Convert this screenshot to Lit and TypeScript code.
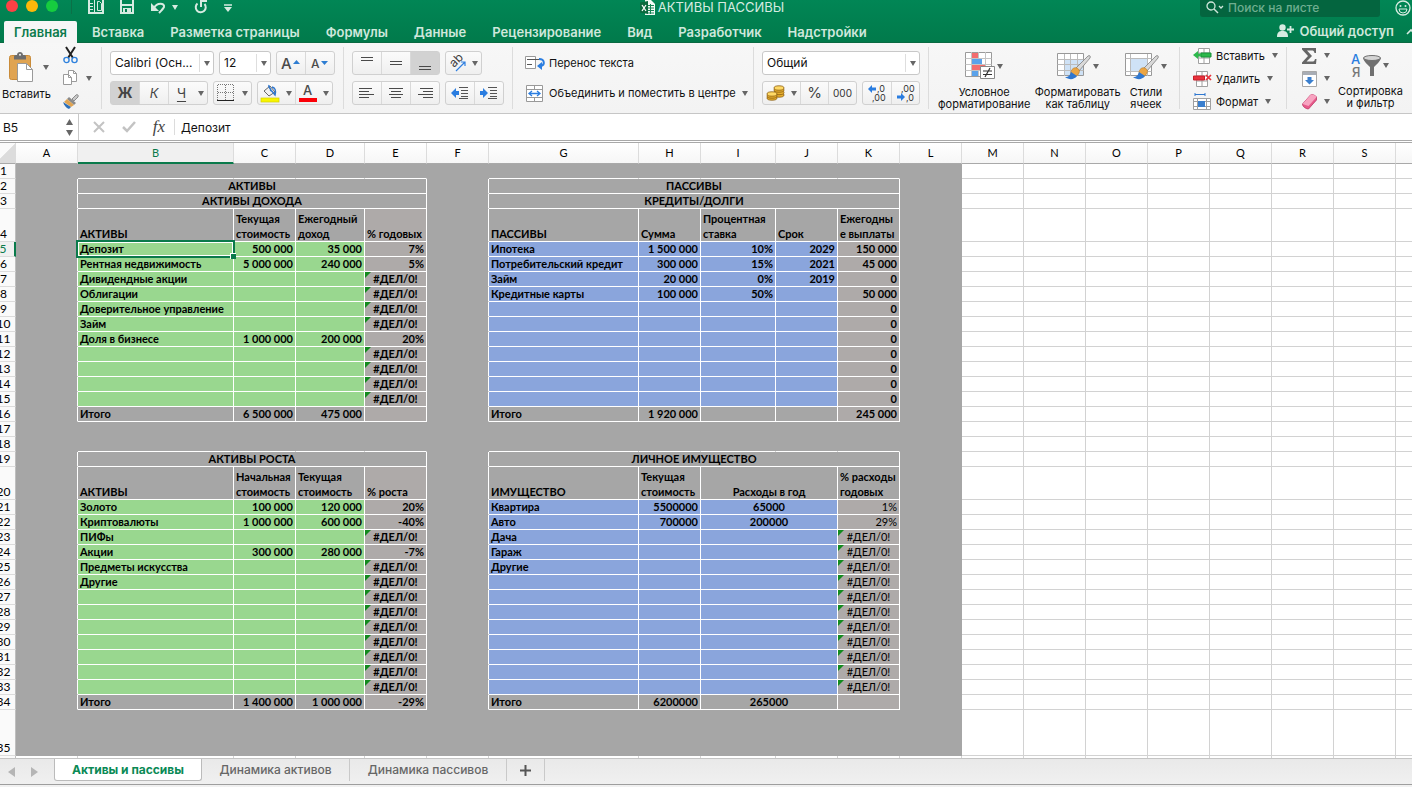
import { LitElement, html, css, svg, nothing } from "lit";
import { customElement } from "lit/decorators.js";
import { classMap } from "lit/directives/class-map.js";

type Fill = "plain" | "green" | "blue" | "taupe";
interface Cell {
  text?: string;
  lines?: string[];
  fill: Fill;
  align?: "left" | "right" | "center";
  span?: number;
  light?: boolean;
  error?: boolean;
}

const ERR = "#ДЕЛ/0!";
const LAST_COLUMN = 22;
const LAST_ROW = 36;
const SHADED_COLUMNS = 12;
const letter = (i: number) => String.fromCharCode(65 + i);

const label = (text: string, fill: Fill = "plain"): Cell => ({ text, fill, align: "left" });
const head = (lines: string[], fill: Fill = "plain", span = 1, align: Cell["align"] = "left"): Cell => ({ lines, fill, span, align });
const num = (text: string, fill: Fill, extra: Partial<Cell> = {}): Cell =>
  text === ERR
    ? { text, fill, align: "center", error: true, ...extra }
    : { text, fill, align: "right", ...extra };

const left: Record<number, Cell[]> = {};
const right: Record<number, Cell[]> = {};

left[2] = [{ text: "АКТИВЫ", fill: "plain", align: "center", span: 4 }];
left[3] = [{ text: "АКТИВЫ ДОХОДА", fill: "plain", align: "center", span: 4 }];
left[4] = [head(["АКТИВЫ"]), head(["Текущая", "стоимость"]), head(["Ежегодный", "доход"]), head(["% годовых"], "taupe")];
[
  ["Депозит", "500 000", "35 000", "7%"],
  ["Рентная недвижимость", "5 000 000", "240 000", "5%"],
  ["Дивидендные акции", "", "", ERR],
  ["Облигации", "", "", ERR],
  ["Доверительное управление", "", "", ERR],
  ["Займ", "", "", ERR],
  ["Доля в бизнесе", "1 000 000", "200 000", "20%"],
  ["", "", "", ERR],
  ["", "", "", ERR],
  ["", "", "", ERR],
  ["", "", "", ERR],
].forEach(([a, b, c, d], i) => {
  left[5 + i] = [label(a, "green"), num(b, "green"), num(c, "green"), num(d, "taupe")];
});
left[16] = [label("Итого"), num("6 500 000", "plain"), num("475 000", "plain"), num("", "taupe")];

left[19] = [{ text: "АКТИВЫ РОСТА", fill: "plain", align: "center", span: 4 }];
left[20] = [head(["АКТИВЫ"]), head(["Начальная", "стоимость"]), head(["Текущая", "стоимость"]), head(["% роста"], "taupe")];
[
  ["Золото", "100 000", "120 000", "20%"],
  ["Криптовалюты", "1 000 000", "600 000", "-40%"],
  ["ПИФы", "", "", ERR],
  ["Акции", "300 000", "280 000", "-7%"],
  ["Предметы искусства", "", "", ERR],
  ["Другие", "", "", ERR],
  ["", "", "", ERR],
  ["", "", "", ERR],
  ["", "", "", ERR],
  ["", "", "", ERR],
  ["", "", "", ERR],
  ["", "", "", ERR],
  ["", "", "", ERR],
].forEach(([a, b, c, d], i) => {
  left[21 + i] = [label(a, "green"), num(b, "green"), num(c, "green"), num(d, "taupe")];
});
left[34] = [label("Итого"), num("1 400 000", "plain"), num("1 000 000", "plain"), num("-29%", "taupe")];

right[2] = [{ text: "ПАССИВЫ", fill: "plain", align: "center", span: 5 }];
right[3] = [{ text: "КРЕДИТЫ/ДОЛГИ", fill: "plain", align: "center", span: 5 }];
right[4] = [head(["ПАССИВЫ"]), head(["Сумма"]), head(["Процентная", "ставка"]), head(["Срок"]), head(["Ежегодны", "е выплаты"])];
[
  ["Ипотека", "1 500 000", "10%", "2029", "150 000"],
  ["Потребительский кредит", "300 000", "15%", "2021", "45 000"],
  ["Займ", "20 000", "0%", "2019", "0"],
  ["Кредитные карты", "100 000", "50%", "", "50 000"],
  ["", "", "", "", "0"],
  ["", "", "", "", "0"],
  ["", "", "", "", "0"],
  ["", "", "", "", "0"],
  ["", "", "", "", "0"],
  ["", "", "", "", "0"],
  ["", "", "", "", "0"],
].forEach(([a, b, c, d, e], i) => {
  right[5 + i] = [label(a, "blue"), num(b, "blue"), num(c, "blue"), num(d, "blue"), num(e, "taupe")];
});
right[16] = [label("Итого"), num("1 920 000", "plain"), num("", "plain"), num("", "plain"), num("245 000", "taupe")];

right[19] = [{ text: "ЛИЧНОЕ ИМУЩЕСТВО", fill: "plain", align: "center", span: 5 }];
right[20] = [head(["ИМУЩЕСТВО"]), head(["Текущая", "стоимость"]), head(["Расходы в год"], "plain", 2, "center"), head(["% расходы", "годовых"])];
[
  ["Квартира", "5500000", "65000", "1%"],
  ["Авто", "700000", "200000", "29%"],
  ["Дача", "", "", ERR],
  ["Гараж", "", "", ERR],
  ["Другие", "", "", ERR],
  ["", "", "", ERR],
  ["", "", "", ERR],
  ["", "", "", ERR],
  ["", "", "", ERR],
  ["", "", "", ERR],
  ["", "", "", ERR],
  ["", "", "", ERR],
  ["", "", "", ERR],
].forEach(([a, b, c, d], i) => {
  right[21 + i] = [
    label(a, "blue"),
    num(b, "blue"),
    { text: c, fill: "blue", align: "center", span: 2 },
    num(d, "taupe", { light: true }),
  ];
});
right[34] = [label("Итого"), num("6200000", "plain"), { text: "265000", fill: "plain", align: "center", span: 2 }, num("", "taupe")];

const caret = html`<svg class="caret" width="6" height="5" viewBox="0 0 6 5" aria-hidden="true"><path d="M0 0h6L3 5z" fill="currentColor" /></svg>`;

const icon = (w: number, h: number, body: unknown) =>
  html`<svg width=${w} height=${h} viewBox="0 0 ${w} ${h}" fill="none" aria-hidden="true">${body}</svg>`;

const lines = (rows: [number, number, number][]) =>
  icon(16, 16, rows.map(([x1, x2, y]) => svg`<path d="M${x1} ${y + 0.5}H${x2}" stroke="#4a4a4a" />`));

const brush = svg`
  <path d="M31 5 19 17l3 3L33 7c1-2-.5-3-2-2z" fill="#d9d9d9" stroke="#7d7d7d" stroke-width=".8" />
  <path d="M14 22c0-4 3-6 6-5 2 1 3 3 2 5-1 3-4 4-8 4z" fill="#eba543" stroke="#b87a25" stroke-width=".6" />
  <path d="M8 26c4 0 5-2 6-5l6 4c-3 4-8 4-12 1z" fill="#2f77cf" />`;

const icons = {
  panel: icon(16, 14, svg`<path d="M1 0v13h14V0" stroke="#d6ebe1" stroke-width="2"/><path d="M6.5 0v13M2 3.500h3M2 6.500h3M2 9.500h3" stroke="#d6ebe1"/><path d="M9.500 10.500v-9h2l2 2v7z" stroke="#d6ebe1"/>`),
  save: icon(14, 14, svg`<path d="M1 0v13h12V0" stroke="#d6ebe1" stroke-width="2"/><path d="M1 4h12v2H1z" fill="#d6ebe1"/><path d="M3 8h8v5H3z" fill="#d6ebe1"/><path d="M5 9h2v3H5z" fill="#017e4f"/>`),
  undo: icon(16, 13, svg`<path d="M1 2v8h8z" fill="#d6ebe1"/><path d="M4 7c3-6 11-5 10-1-1 2-3 4-5 6" stroke="#d6ebe1" stroke-width="2"/>`),
  redo: icon(14, 14, svg`<path d="M10.500 4a5 5 0 1 1-7-.5" stroke="#d6ebe1" stroke-width="2"/><path d="M7 7V1h6" stroke="#d6ebe1" stroke-width="2"/>`),
  more: icon(8, 10, svg`<path d="M0 3h8" stroke="#d6ebe1" stroke-width="1.500"/><path d="M0 5h8l-4 5z" fill="#d6ebe1"/>`),
  file: icon(15, 15, svg`<path d="M5 0h6l4 4v11H5z" fill="#f3faf6"/><path d="M7 5.500h7M7 8h7M7 10.500h7M7 13h7M10.500 4v10" stroke="#178455"/><path d="M0 2.500 8 1v13l-8-1.500z" fill="#0b6a3e"/><path d="m2 5 4 6M6 5l-4 6" stroke="#fff" stroke-width="1.300"/>`),
  search: icon(18, 13, svg`<circle cx="5" cy="5" r="4" stroke="#cfe6da" stroke-width="1.300"/><path d="m8 8 4 4" stroke="#cfe6da" stroke-width="1.500"/><path d="m13 5 2 2 2-2" stroke="#cfe6da" stroke-width="1.300"/>`),
  smile: icon(16, 16, svg`<circle cx="8" cy="7" r="7" stroke="#d6ebe1" stroke-width="1.300"/><path d="M4 8a4 4 0 0 0 8 0z" stroke="#d6ebe1"/><circle cx="5.500" cy="5" r="1" fill="#d6ebe1"/><circle cx="10.500" cy="5" r="1" fill="#d6ebe1"/>`),
  share: icon(17, 13, svg`<circle cx="5.500" cy="3.500" r="3.200" fill="#d6ebe1"/><path d="M0 13c0-5 2-6 5.500-6S11 8 11 13z" fill="#d6ebe1"/><path d="M13.500 2v7M10 5.500h7" stroke="#d6ebe1" stroke-width="1.800"/>`),
  chevron: icon(9, 6, svg`<path d="m1 5 4-4 4 4" stroke="#d6ebe1" stroke-width="1.600"/>`),
  paste: icon(25, 31, svg`<rect x=".5" y="3.500" width="21" height="24" rx="2" fill="#e0a452" stroke="#c98b39"/><path d="M5 7.500V4.500C5 3 6.500 3 8 3c0-4 6-4 6 0 1.500 0 3 0 3 1.500v3z" fill="#6d6d6d"/><circle cx="11" cy="2.800" r="1" fill="#f4f4f4"/><path d="M8.500 11.500h9l6 6v12h-15z" fill="#fff" stroke="#9a9a9a"/><path d="M17.500 11.500v6h6" stroke="#9a9a9a"/>`),
  cut: icon(15, 17, svg`<path d="m3 0 7 11M12 0 5 11" stroke="#222" stroke-width="2"/><circle cx="3.500" cy="13" r="2.600" stroke="#2f82dd" stroke-width="1.400"/><circle cx="11.500" cy="13" r="2.600" stroke="#2f82dd" stroke-width="1.400"/>`),
  copy: icon(15, 16, svg`<path d="M5.500.5h5l3 3v8h-8z" fill="#fff" stroke="#9a9a9a"/><path d="M10.500.5v3h3" stroke="#9a9a9a"/><path d="M.5 4.500h5l3 3v7H.500z" fill="#fff" stroke="#9a9a9a"/><path d="M5.500 4.500v3h3" stroke="#9a9a9a"/>`),
  painter: icon(16, 15, svg`<path d="m9 5 4-4c1-1 3 0 2 2l-4 4z" fill="#c8c8c8" stroke="#777" stroke-width=".8"/><path d="m6 3 7 6-2 2-7-6z" fill="#8a8a8a"/><path d="m4 5 7 6-3 2-7-5z" fill="#e0a452"/><path d="m0 8 8 5-2 2C3 14 1 11 0 8z" fill="#2c6fb8"/>`),
  grow: icon(22, 14, svg`<text x="1" y="13" font-size="15" font-weight="500" fill="#4a4a4a">A</text><path d="M13 8h7l-3.500-4z" fill="#2d7dd2"/>`),
  shrink: icon(20, 14, svg`<text x="1" y="12" font-size="12" font-weight="500" fill="#4a4a4a">A</text><path d="M11 5h7l-3.500 4z" fill="#2d7dd2"/>`),
  borders: icon(18, 18, svg`<path d="M.5 1v15M8.500 1v15M16.500 1v15M1 .5h16M1 8.500h16" stroke="#777" stroke-dasharray="1 1"/><path d="M0 16.500h17" stroke="#222"/>`),
  bucket: icon(18, 18, svg`<path d="m3 7 6-5 5 6-6 4z" fill="#f0f0f0" stroke="#666"/><path d="M8 1c-1 2 1 3 2 5M11 3c4 1 4 4 3 8-2-2-2-4-5-5" stroke="#2f77cf" stroke-width="1.500"/><rect y="14" width="18" height="4" fill="#f8f400" stroke="#d5d000" stroke-width=".7"/>`),
  fontColor: icon(18, 18, svg`<text x="4" y="11" font-size="13" font-weight="500" fill="#4a4a4a">A</text><rect y="14" width="18" height="4" fill="#fb0007"/>`),
  orient: icon(18, 18, svg`<text x="0" y="0" transform="translate(5 14) rotate(-45)" font-size="12" fill="#3d3d3d">ab</text><path d="m7 17 9-9M12 8h4v4" stroke="#2f7fe0" stroke-width="1.200"/>`),
  outdent: icon(18, 12, svg`<path d="M0 6l5-5v3h3v4H5v3z" fill="#2a7de0"/><path d="M8 .5h9M10 3.500h7M10 6.500h7M10 9.500h7M8 11.500h9" stroke="#555"/>`),
  indent: icon(18, 12, svg`<path d="M8 6 3 1v3H0v4h3v3z" fill="#2a7de0"/><path d="M8 .5h9M10 3.500h7M10 6.500h7M10 9.500h7M8 11.500h9" stroke="#555"/>`),
  wrap: icon(20, 14, svg`<path d="M.5.500h10v12H.500z" fill="#fff" stroke="#999"/><path d="M2 3.500h12M2 8.500h5" stroke="#555"/><path d="M14 3c6 0 6 6 2 7" stroke="#2a7de0" stroke-width="2"/><path d="m17 6-5 4 5 4z" fill="#2a7de0"/>`),
  merge: icon(20, 17, svg`<path d="M1.500.500h16v16h-16z" fill="#fff" stroke="#999"/><path d="M1 4.500h17M1 12.500h17M9.500 0v4.500M9.500 12.500V17" stroke="#999"/><path d="M4 8.500h11M7 6 4 8.500 7 11M12 6l3 2.500-3 2.500" stroke="#2a7de0" stroke-width="1.300"/>`),
  coins: icon(19, 16, svg`<g fill="#e8b02e" stroke="#8a5d10" stroke-width=".8"><ellipse cx="13" cy="10" rx="5" ry="2.200"/><ellipse cx="13" cy="7.500" rx="5" ry="2.200"/><ellipse cx="13" cy="5" rx="5" ry="2.200"/><ellipse cx="13" cy="3" rx="5" ry="2.200" fill="#ffd966"/><ellipse cx="6" cy="13" rx="5" ry="2.200"/><ellipse cx="6" cy="11" rx="5" ry="2.200"/><ellipse cx="6" cy="9" rx="5" ry="2.200" fill="#ffd966"/></g>`),
  moreDigits: icon(18, 18, svg`<path d="M0 5l4-4v2.500h4v3H4V9z" fill="#2a7de0"/><text x="9" y="8" font-size="9" fill="#333">,0</text><text x="4" y="17" font-size="9" fill="#333">,00</text>`),
  fewerDigits: icon(18, 18, svg`<text x="4" y="8" font-size="9" fill="#333">,00</text><path d="M8 13 4 9v2.500H0v3h4V17z" fill="#2a7de0"/><text x="9" y="17" font-size="9" fill="#333">,0</text>`),
  conditional: icon(30, 30, svg`<path d="M.5 1.500h26v24H.500z" fill="#fff" stroke="#9a9a9a"/><path d="M.5 7.500h26M.5 13.500h26M.5 19.500h26M6.500 1v24M20.500 1v24M13.500 1v24" stroke="#c4c4c4"/><path d="M7 2h6v5H7zM7 14h13v5H7z" fill="#f36d6e"/><path d="M7 8h10v5H7zM7 20h6v5H7z" fill="#5aa2ea"/><path d="M15.500 15.500h14v12h-14z" fill="#fff" stroke="#888"/><path d="M18 20h9M18 23.500h9M25 17l-5 9" stroke="#333" stroke-width="1.200"/>`),
  tableFormat: icon(34, 30, svg`<path d="M.5 2.500h26v22H.500z" fill="#fff" stroke="#999"/><path d="M8 9h18v15H8z" fill="#cfe2f6"/><path d="M.5 8.500h26M.5 13.500h26M.5 19.500h26M7.500 3v22M13.500 3v22M20.500 3v22" stroke="#bbb"/>${brush}`),
  cellStyles: icon(34, 30, svg`<path d="M.5 2.500h26v22H.500z" fill="#fff" stroke="#999"/><path d="M.5 7.500h26M.5 20.500h26M5.500 3v22M22.500 3v22" stroke="#bbb"/><path d="M6 8h16v12H6z" fill="#cfe2f6"/>${brush}`),
  insert: icon(19, 16, svg`<path d="M5.500.5h11v15h-11zM5.500 5h11M5.500 10h11M11 1v15" stroke="#a0a0a0" fill="#fff"/><path d="M8 5h10v4H8z" fill="#2db84c" stroke="#18933a"/><path d="M0 7l5-4v2.500h3v3H5V11z" fill="#2db84c"/>`),
  remove: icon(19, 16, svg`<path d="M3.500.5h11v15h-11zM3.500 5h11M3.500 10h11M9 1v15" stroke="#a0a0a0" fill="#fff"/><path d="M.5 5h11v4H.500z" fill="#e8323c" stroke="#c71f2b"/><path d="m13 4 5 5M18 4l-5 5" stroke="#e8323c" stroke-width="1.700"/>`),
  format: icon(19, 17, svg`<path d="M2 1.500h10M2 0v3M12 0v3" stroke="#2f77cf"/><path d="M.5 5.500h17v11H.500zM.5 8.500h17M.5 13.500h17M4.500 6v11M13.500 6v11" stroke="#a0a0a0" fill="#fff"/><path d="M5 8h7v6H5z" fill="#3a7fce"/>`),
  sigma: icon(15, 16, svg`<path d="M0 0h14v5h-1.500c-.5-2-1-2.500-3-2.500H5L10 8l-5.500 5.500H10c2 0 2.500-.5 3-2.500h1.500L14 16H0v-1.500L6 8 0 1.500z" fill="#666"/>`),
  fill: icon(15, 16, svg`<path d="M.5.500h14v15H.500z" fill="#fff" stroke="#a8a8a8"/><path d="M1 1h13v3H1z" fill="#a8adb5"/><path d="M5.500 6h4v3H12l-4.500 4.500L3 9h2.500z" fill="#3a7fce"/>`),
  erase: icon(15, 16, svg`<path d="m.5 10 8-9c1-1 5 0 6 2v3l-8 9c-2 0-6-2-6-5z" fill="#e8588a" stroke="#b93a66" stroke-width=".8"/><path d="m.5 10 8-9c1-1 5 0 6 2l-8 9z" fill="#f7a3c0"/>`),
  sort: icon(30, 26, svg`<text x="0" y="11" font-size="13" font-weight="500" fill="#2a7de0">А</text><text x="1" y="24" font-size="13" font-weight="500" fill="#777">Я</text><path d="M12 5c1 4 5 7 7 9v9h4v-9c2-2 6-5 7-9z" fill="#707070"/><ellipse cx="21" cy="5" rx="8.500" ry="2.500" fill="#d4d4d4" stroke="#707070"/>`),
  cancel: icon(12, 12, svg`<path d="m1 1 10 10M11 1 1 11" stroke="#c3c3c3" stroke-width="2"/>`),
  accept: icon(14, 12, svg`<path d="m1 6 4 4 8-9" stroke="#c3c3c3" stroke-width="2.500"/>`),
};

@customElement("app-root")
export class AppRoot extends LitElement {
  static styles = css`
    :host {
      display: flex;
      flex-direction: column;
      height: 100vh;
      overflow: hidden;
      font-family: Inter, "Liberation Sans", sans-serif;
      font-size: 11px;
      line-height: 12px;
      color: #111;
      background: #fff;
    }
    * { box-sizing: border-box; }
    button, input, select {
      font: inherit;
      color: inherit;
      margin: 0;
      padding: 0;
      border: 0;
      background: none;
      border-radius: 0;
    }
    svg { display: block; flex: none; overflow: visible; }
    .caret { color: #666; }
    .top { background: linear-gradient(#018655, #017a4b); border-bottom: 1px solid #0a6a42; height: 43px; flex: none; }
    .title-bar {
      display: grid;
      grid-template-columns: 1fr auto 1fr;
      height: 21px;
      align-items: start;
      color: #d6ebe1;
    }
    .quick { display: flex; align-items: flex-start; height: 14px; }
    .quick button { display: flex; align-items: center; height: 14px; }
    .quick .light { width: 12px; height: 12px; border-radius: 50%; margin-left: 6px; margin-right: 2px; }
    .red { background: #fc4145; }
    .yellow { background: #fdb80a; }
    .lime { background: #16cc3f; }
    .split { width: 1px; height: 14px; background: #0b7047; margin: 0 16px 0 11px; }
    .gap-l { margin-left: 16px; }
    .gap-s { margin-left: 6px; }
    .quick .caret { color: #d6ebe1; }
    .title { display: flex; gap: 3px; font-size: 13px; line-height: 15px; font-weight: 400; margin: 0; padding-left: 12px; }
    .tools { display: flex; justify-content: flex-end; }
    .search {
      display: flex;
      align-items: center;
      gap: 4px;
      width: 180px;
      height: 17px;
      padding: 0 6px 2px;
      border-radius: 0 0 3px 3px;
      background: #04653f;
      margin-right: 15px;
    }
    .search input { width: 130px; font-size: 12px; font-weight: 500; outline: 0; }
    .search input::placeholder { color: #6fae90; opacity: 1; }
    .smile { width: 17px; overflow: hidden; }
    .tab-row { display: flex; height: 22px; align-items: stretch; padding-left: 4px; }
    .tab-row button { font-size: 13px; font-weight: 600; padding: 0 13px; color: #cfe8dc; white-space: nowrap; }
    .tab-row .current { background: #f6f6f6; color: #0a7a4b; padding: 0 10px; border-radius: 2px 2px 0 0; margin-right: 2px; }
    .tab-row .share { display: flex; align-items: center; gap: 5px; margin-left: auto; padding: 0 12px 3px 0; }
    .tab-row .collapse { padding: 0; width: 6px; overflow: hidden; }

    .ribbon {
      display: flex;
      flex: none;
      height: 71px;
      padding: 4px 0;
      background: linear-gradient(#f7f7f7, #f3f3f3);
      border-bottom: 1px solid #c6c6c6;
      overflow: hidden;
    }
    .group { display: flex; flex: none; padding: 0 8px; border-right: 1px solid #dcdcdc; }
    .group:last-child { border: 0; }
    .stack { display: grid; align-content: start; justify-items: start; gap: 6px; padding-top: 4px; }
    .row { display: flex; gap: 5px; }
    .clip { padding: 0 0 0 2px; gap: 12px; width: 102px; }
    .tall { display: flex; flex-direction: column; align-items: center; padding-top: 4px; white-space: nowrap; }
    .tall .pic { display: flex; align-items: center; gap: 2px; height: 30px; }
    .tall .name { display: block; margin-top: 5px; line-height: 12px; text-align: center; }
    .paste .pic { gap: 9px; padding-left: 5px; height: 32px; }
    .small { display: grid; grid-template-rows: 23px 24px 16px; align-items: start; }
    .small button { display: flex; align-items: center; gap: 8px; min-width: 27px; }
    .pick { position: relative; display: flex; height: 24px; border: 1px solid #c8c8c8; border-radius: 3px; background: #fff; }
    .pick select { appearance: none; width: 100%; padding: 0 14px 0 4px; font-size: 12px; color: #111; outline: 0; }
    .pick .arrow { position: absolute; right: 0; top: 2px; bottom: 2px; width: 14px; border-left: 1px solid #dedede; display: grid; place-items: center; pointer-events: none; }
    .w-font { width: 104px; }
    .w-size { width: 52px; }
    .w-number { width: 158px; }
    .set { display: flex; height: 24px; border: 1px solid #d0d0d0; border-radius: 3px; background: linear-gradient(#fbfbfb, #efefef); }
    .set button { display: flex; align-items: center; justify-content: center; width: 29px; border-left: 1px solid #d9d9d9; font-size: 13px; }
    .set button:first-child { border-left: 0; width: 28px; }
    .set .on { background: #d2d2d2; }
    .set .slim { width: 13px; border-left: 0; }
    .set .wide, .set .wide:first-child { width: 35px; gap: 5px; }
    .set .mid, .set .mid:first-child { width: 24px; }
    .set .near { width: 26px; }
    .set .snug { width: 28px; }
    .set .percent { font-size: 15px; color: #444; }
    .set .thousand { font-size: 10px; color: #333; }
    .set .bold { font-weight: 700; font-size: 14px; color: #444; }
    .italic { font-style: italic; color: #444; }
    .under { text-decoration: underline; text-underline-offset: 3px; color: #444; }
    .text-group { display: grid; grid-template-rows: 24px 24px; gap: 6px; align-content: start; padding: 4px 12px 0; width: 241px; justify-items: start; }
    .text-group button { display: flex; align-items: center; gap: 4px; white-space: nowrap; }
    .text-group .caret { margin-left: 2px; }
    .looks { padding: 0 12px 0 9px; width: 251px; justify-content: space-between; }
    .cells { width: 107px; padding: 0 0 0 13px; }
    .list { display: grid; grid-template-rows: 17px 17px 17px; gap: 6px; align-content: start; }
    .list button { display: flex; align-items: center; gap: 4px; }
    .list .caret { margin-left: 3px; }
    .edit { padding: 0 0 0 15px; gap: 8px; }

    .formula { display: flex; align-items: center; flex: none; height: 27px; background: #fff; border-bottom: 1px solid #a8a8a8; font-size: 12px; }
    .name-box { display: flex; align-items: center; width: 79px; height: 26px; border-right: 1px solid #c8c8c8; padding-left: 3px; }
    .name-box input { width: 60px; outline: 0; }
    .steps { display: grid; gap: 5px; margin-left: 3px; }
    .formula button { display: flex; justify-content: center; width: 30px; }
    .formula .fx { font: italic 17px/16px "Liberation Serif", serif; color: #444; }
    .formula .entry { flex: 1; height: 16px; outline: 0; border-left: 1px solid #dcdcdc; padding-left: 6px; }
    .actions { display: flex; align-items: center; padding-left: 5px; }

    .sheet { flex: 1; min-height: 0; overflow: hidden; border-top: 1px solid #a8a8a8; margin-top: 1px; }
    table {
      table-layout: fixed;
      width: 0;
      border-collapse: separate;
      border-spacing: 0;
      margin-left: -8px;
      font-family: Lato, "Noto Sans", sans-serif;
      font-size: 11px;
      line-height: 14px;
      color: #000;
    }
    col { width: 62px; }
    .c-head { width: 24px; }
    .c-b { width: 156px; }
    .c-d { width: 69px; }
    .c-g { width: 150px; }
    .c-i { width: 75px; }
    tr { height: 15px; }
    .tall-row { height: 33px; }
    .last-row { height: 46px; }
    .head-row { height: 21px; }
    td, th { padding: 0 2px; border: 0 solid #d2d2d2; border-width: 0 1px 1px 0; vertical-align: bottom; white-space: nowrap; font-weight: 700; }
    .col-head { background: linear-gradient(#fff, #f6f6f6); border-color: #dcdcdc; border-bottom-color: #a9a9a9; font-weight: 400; vertical-align: middle; }
    .row-head { background: #fafafa; border-color: #dcdcdc; border-right-color: #bfbfbf; font-weight: 400; font-size: 12px; padding: 0; text-align: center; }
    .corner { background: linear-gradient(135deg, #fafafa 55%, #dcdcdc 56%); }
    .col-head.active { background: #f0f0f0; color: #0a7a4b; border-bottom: 2px solid #0a7a4b; }
    .row-head.active { background: #f0f0f0; color: #0a7a4b; border-right: 2px solid #0a7a4b; }
    .shade { background: #a6a6a6; border-color: #a6a6a6; }
    .data { border-color: #fff; }
    .edge-right { border-right-color: #fff; }
    .edge-bottom { border-bottom-color: #fff; }
    .plain { background: #a6a6a6; }
    .green { background: #99d78f; }
    .blue { background: #8aa5dc; }
    .taupe { background: #aeaaa9; }
    .left { text-align: left; }
    .right { text-align: right; }
    .center { text-align: center; }
    .regular { font-weight: 400; }
    .line { display: block; line-height: 15px; }
    .error, .selected { position: relative; }
    .flag { position: absolute; left: 0; top: 0; border: 3px solid transparent; border-left-color: #128a1e; border-top-color: #128a1e; }
    .frame { position: absolute; inset: -2px; border: 2px solid #0a7a4b; box-shadow: inset 0 0 0 1px #fff; pointer-events: none; }
    .handle { position: absolute; right: -3px; bottom: -3px; width: 6px; height: 6px; background: #0a7a4b; border: 0 solid #fff; border-width: 1px 0 0 1px; }

    .sheets { display: flex; flex: none; height: 29px; background: linear-gradient(#e9e9e9, #f1f1f1); border-top: 1px solid #c4c4c4; font-size: 12px; font-weight: 500; color: #666; }
    .bar { display: flex; flex: 1; height: 26px; border-bottom: 1px solid #9e9e9e; align-items: flex-start; }
    .bar button { height: 22px; width: 148px; border-right: 1px solid #c9c9c9; white-space: nowrap; }
    .bar .open { background: #fff; color: #0a8a55; font-weight: 700; border: 1px solid #bbb; border-top: 0; border-radius: 0 0 3px 3px; }
    .bar .longer { width: 157px; }
    .bar .add { display: grid; place-items: center; width: 38px; }
    .bar .nav { display: flex; align-items: center; justify-content: center; width: 23px; padding-top: 3px; border: 0; }
    .nav-pair { display: flex; width: 54px; }
  `;

  private colClass(i: number) {
    return ({ 1: "c-b", 3: "c-d", 6: "c-g", 8: "c-i" } as Record<number, string>)[i] ?? "c";
  }

  private dataCell(cell: Cell, selected: boolean) {
    const cls = {
      data: true,
      [cell.fill]: true,
      [cell.align ?? "left"]: true,
      regular: !!cell.light,
      error: !!cell.error,
      selected,
    };
    return html`<td class=${classMap(cls)} colspan=${cell.span ?? 1}>${cell.error ? html`<span class="flag"></span>` : nothing}${cell.lines
      ? cell.lines.map((l) => html`<span class="line">${l}</span>`)
      : cell.text}${selected ? html`<span class="frame"><span class="handle"></span></span>` : nothing}</td>`;
  }

  private emptyCell(row: number, col: number) {
    const shaded = col < SHADED_COLUMNS && row < LAST_ROW;
    const inBlock = !!left[row];
    const aboveBlock = !left[row] && !!left[row + 1] && ((col >= 1 && col <= 4) || (col >= 6 && col <= 10));
    return html`<td class=${classMap({
      shade: shaded,
      "edge-right": inBlock && (col === 0 || col === 5),
      "edge-bottom": aboveBlock,
    })}></td>`;
  }

  private gridRow(row: number) {
    const cells: unknown[] = [];
    for (let col = 0; col < LAST_COLUMN; col++) {
      if (col === 1 && left[row]) {
        cells.push(left[row].map((c, i) => this.dataCell(c, row === 5 && i === 0)));
        col = 4;
      } else if (col === 6 && right[row]) {
        cells.push(right[row].map((c) => this.dataCell(c, false)));
        col = 10;
      } else {
        cells.push(this.emptyCell(row, col));
      }
    }
    const rowClass = classMap({ "tall-row": row === 4 || row === 20, "last-row": row === 35 });
    return html`<tr class=${rowClass}>
      <th scope="row" class=${classMap({ "row-head": true, active: row === 5 })}>${row < LAST_ROW ? row : nothing}</th>${cells}
    </tr>`;
  }

  private renderTop() {
    const tabs = ["Вставка", "Разметка страницы", "Формулы", "Данные", "Рецензирование", "Вид", "Разработчик", "Надстройки"];
    return html`<header class="top">
      <div class="title-bar">
        <div class="quick">
          <button class="light red" aria-label="Закрыть"></button>
          <button class="light yellow" aria-label="Свернуть"></button>
          <button class="light lime" aria-label="Развернуть"></button>
          <span class="split"></span>
          <button aria-label="Боковая панель">${icons.panel}</button>
          <button class="gap-l" aria-label="Сохранить">${icons.save}</button>
          <button class="gap-l" aria-label="Отменить">${icons.undo}</button>
          <button class="gap-s" aria-label="Список отмены">${caret}</button>
          <button class="gap-l" aria-label="Повторить">${icons.redo}</button>
          <button class="gap-l" aria-label="Настроить панель">${icons.more}</button>
        </div>
        <h1 class="title">${icons.file}<span>АКТИВЫ ПАССИВЫ</span></h1>
        <div class="tools">
          <label class="search">${icons.search}<input type="search" placeholder="Поиск на листе" aria-label="Поиск на листе" /></label>
          <button class="smile" aria-label="Отзыв">${icons.smile}</button>
        </div>
      </div>
      <nav class="tab-row">
        <button class="current">Главная</button>
        ${tabs.map((t) => html`<button>${t}</button>`)}
        <button class="share">${icons.share}<span>Общий доступ</span></button>
        <button class="collapse" aria-label="Свернуть ленту">${icons.chevron}</button>
      </nav>
    </header>`;
  }

  private pick(name: string, value: string, cls: string) {
    return html`<span class="pick ${cls}"><select aria-label=${name}><option>${value}</option></select><span class="arrow">${caret}</span></span>`;
  }

  private renderRibbon() {
    return html`<section class="ribbon">
      <div class="group clip">
        <button class="tall paste"><span class="pic">${icons.paste}${caret}</span><span class="name">Вставить</span></button>
        <div class="small">
          <button aria-label="Вырезать">${icons.cut}</button>
          <button aria-label="Копировать">${icons.copy}${caret}</button>
          <button aria-label="Формат по образцу">${icons.painter}</button>
        </div>
      </div>
      <div class="group">
        <div class="stack">
          <div class="row">
            ${this.pick("Шрифт", "Calibri (Осн...", "w-font")} ${this.pick("Размер шрифта", "12", "w-size")}
            <div class="set">
              <button aria-label="Увеличить шрифт">${icons.grow}</button>
              <button aria-label="Уменьшить шрифт">${icons.shrink}</button>
            </div>
          </div>
          <div class="row">
            <div class="set">
              <button class="on bold">Ж</button>
              <button class="italic">К</button>
              <button class="under near">Ч</button>
              <button class="slim" aria-label="Вид подчёркивания">${caret}</button>
            </div>
            <div class="set">
              <button class="mid" aria-label="Границы">${icons.borders}</button>
              <button class="slim" aria-label="Вид границ">${caret}</button>
            </div>
            <div class="set">
              <button class="mid" aria-label="Цвет заливки">${icons.bucket}</button>
              <button class="slim" aria-label="Выбрать заливку">${caret}</button>
              <button class="mid" aria-label="Цвет шрифта">${icons.fontColor}</button>
              <button class="slim" aria-label="Выбрать цвет">${caret}</button>
            </div>
          </div>
        </div>
      </div>
      <div class="group">
        <div class="stack">
          <div class="row">
            <div class="set">
              <button aria-label="По верхнему краю">${lines([[2, 14, 2], [2, 14, 5]])}</button>
              <button aria-label="Посередине">${lines([[2, 14, 6], [2, 14, 9]])}</button>
              <button class="on" aria-label="По нижнему краю">${lines([[2, 14, 11], [2, 14, 14]])}</button>
            </div>
            <div class="set"><button class="wide" aria-label="Ориентация">${icons.orient}${caret}</button></div>
          </div>
          <div class="row">
            <div class="set">
              <button aria-label="По левому краю">${lines([[0, 13, 3], [0, 10, 6], [0, 15, 9], [0, 10, 12]])}</button>
              <button aria-label="По центру">${lines([[1, 15, 3], [3, 13, 6], [1, 15, 9], [3, 13, 12]])}</button>
              <button aria-label="По правому краю">${lines([[3, 16, 3], [6, 16, 6], [1, 16, 9], [6, 16, 12]])}</button>
            </div>
            <div class="set">
              <button aria-label="Уменьшить отступ">${icons.outdent}</button>
              <button aria-label="Увеличить отступ">${icons.indent}</button>
            </div>
          </div>
        </div>
      </div>
      <div class="group text-group">
        <button>${icons.wrap}<span>Перенос текста</span></button>
        <button>${icons.merge}<span>Объединить и поместить в центре</span>${caret}</button>
      </div>
      <div class="group">
        <div class="stack">
          ${this.pick("Числовой формат", "Общий", "w-number")}
          <div class="row">
            <div class="set">
              <button class="mid" aria-label="Денежный формат">${icons.coins}</button>
              <button class="slim" aria-label="Выбрать валюту">${caret}</button>
              <button class="snug percent">%</button>
              <button class="snug thousand">000</button>
            </div>
            <div class="set">
              <button aria-label="Увеличить разрядность">${icons.moreDigits}</button>
              <button class="snug" aria-label="Уменьшить разрядность">${icons.fewerDigits}</button>
            </div>
          </div>
        </div>
      </div>
      <div class="group looks">
        <button class="tall"><span class="pic">${icons.conditional}${caret}</span><span class="name">Условное<br />форматирование</span></button>
        <button class="tall"><span class="pic">${icons.tableFormat}${caret}</span><span class="name">Форматировать<br />как таблицу</span></button>
        <button class="tall"><span class="pic">${icons.cellStyles}${caret}</span><span class="name">Стили<br />ячеек</span></button>
      </div>
      <div class="group cells">
        <div class="list">
          <button>${icons.insert}<span>Вставить</span>${caret}</button>
          <button>${icons.remove}<span>Удалить</span>${caret}</button>
          <button>${icons.format}<span>Формат</span>${caret}</button>
        </div>
      </div>
      <div class="group edit">
        <div class="list">
          <button aria-label="Автосумма">${icons.sigma}${caret}</button>
          <button aria-label="Заполнить">${icons.fill}${caret}</button>
          <button aria-label="Очистить">${icons.erase}${caret}</button>
        </div>
        <button class="tall"><span class="pic">${icons.sort}${caret}</span><span class="name">Сортировка<br />и фильтр</span></button>
      </div>
    </section>`;
  }

  render() {
    const cols = Array.from({ length: LAST_COLUMN }, (_, i) => i);
    const rows = Array.from({ length: LAST_ROW }, (_, i) => i + 1);
    return html`${this.renderTop()} ${this.renderRibbon()}
      <div class="formula">
        <div class="name-box">
          <input aria-label="Имя ячейки" value="B5" />
          <span class="steps">${icon(7, 6, svg`<path d="M0 6h7L3.500 0z" fill="#666"/>`)}${icon(7, 6, svg`<path d="M0 0h7L3.500 6z" fill="#666"/>`)}</span>
        </div>
        <div class="actions">
          <button aria-label="Отмена">${icons.cancel}</button>
          <button aria-label="Ввод">${icons.accept}</button>
          <button class="fx" aria-label="Вставить функцию">fx</button>
        </div>
        <input class="entry" aria-label="Строка формул" value="Депозит" />
      </div>
      <main class="sheet">
        <table>
          <colgroup>
            <col class="c-head" />
            ${cols.map((i) => html`<col class=${this.colClass(i)} />`)}
          </colgroup>
          <thead>
            <tr class="head-row">
              <th class="col-head corner"></th>
              ${cols.map((i) => html`<th scope="col" class=${classMap({ "col-head": true, active: i === 1 })}>${letter(i)}</th>`)}
            </tr>
          </thead>
          <tbody>
            ${rows.map((r) => this.gridRow(r))}
          </tbody>
        </table>
      </main>
      <footer class="sheets">
        <div class="bar">
          <div class="nav-pair">
            <button class="nav" aria-label="Предыдущий лист">${icon(7, 10, svg`<path d="M7 0v10L0 5z" fill="#b5b5b5"/>`)}</button>
            <button class="nav" aria-label="Следующий лист">${icon(7, 10, svg`<path d="M0 0v10l7-5z" fill="#b5b5b5"/>`)}</button>
          </div>
          <button class="open">Активы и пассивы</button>
          <button>Динамика активов</button>
          <button class="longer">Динамика пассивов</button>
          <button class="add" aria-label="Добавить лист">${icon(11, 11, svg`<path d="M5.500 0v11M0 5.500h11" stroke="#555" stroke-width="2"/>`)}</button>
        </div>
      </footer>`;
  }
}
